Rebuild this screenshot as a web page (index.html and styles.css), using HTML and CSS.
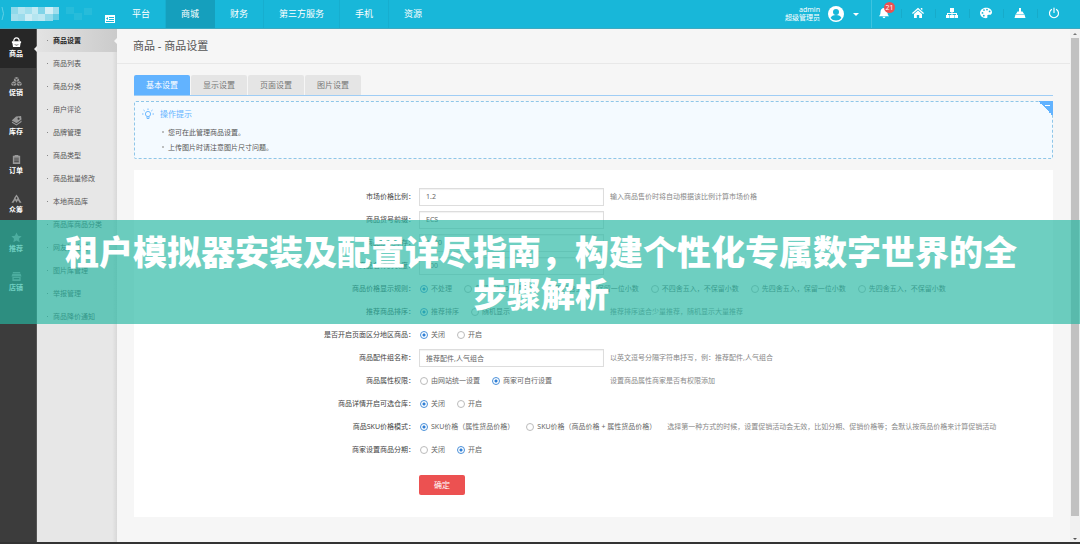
FILE: index.html
```html
<!DOCTYPE html>
<html lang="zh-CN">
<head>
<meta charset="utf-8">
<meta name="viewport" content="width=device-width, initial-scale=1">
<title>商品设置</title>
<link rel="stylesheet" href="styles.css">
</head>
<body>
<div class="app">
  <header class="topbar">
    <div class="brand">
      <svg class="logo" viewBox="0 0 92 28" aria-hidden="true">
        <path d="M2 7q3 7 0 13" fill="none" stroke="#5fcfe5"/>
        <path fill="#8fd9ea" d="M11 7h7v7h-7z"/><path fill="#b5e5f0" d="M18 7h7v7h-7z"/><path fill="#a2dfed" d="M25 7h7v7h-7z"/><path fill="#c2eaf3" d="M32 7h6v7h-6z"/><path fill="#80d4e8" d="M38 7h7v7h-7z"/><path fill="#d2eff6" d="M45 7h8v7h-8z"/><path fill="#a0deed" d="M53 7h6v7h-6z"/>
        <path fill="#a5dfed" d="M11 14h7v7h-7z"/><path fill="#9cdcec" d="M18 14h7v7h-7z"/><path fill="#cdedf5" d="M25 14h7v7h-7z"/><path fill="#b4e5f0" d="M32 14h6v7h-6z"/><path fill="#bce8f2" d="M38 14h7v7h-7z"/><path fill="#92daea" d="M45 14h8v7h-8z"/><path fill="#64cce3" d="M53 14h6v6h-6z"/>
        <path fill="#27bcda" d="M66 7h8v7h-8zM74 13h8v7h-8zM84 8h8v7h-8z"/>
      </svg>
      <button class="fold" aria-label="收起菜单"><svg viewBox="0 0 10 8"><path fill="#fff" fill-rule="evenodd" d="M0 0h10v8H0zM4 2v1h5V2zM4 4v1h5V4zM1 6v1h8V6zM3 2 1 3.500 3 5z"/></svg></button>
    </div>
    <nav class="mainnav">
      <a href="#">平台</a><a href="#" class="on">商城</a><a href="#">财务</a><a href="#">第三方服务</a><a href="#">手机</a><a href="#">资源</a>
    </nav>
    <div class="user">
      <div class="who"><span>admin</span><span>超级管理员</span></div>
      <svg class="avatar" viewBox="0 0 16 16"><circle cx="8" cy="8" r="8" fill="#fff"/><circle cx="8" cy="6" r="3" fill="#18b7d9"/><path d="M2.6 12q1-3 5.400-3t5.400 3Q11.500 14.500 8 14.500T2.600 12z" fill="#18b7d9"/></svg>
      <svg class="caret" viewBox="0 0 6 3"><path fill="#fff" d="M0 0h6L3 3z"/></svg>
    </div>
    <div class="tools">
      <button aria-label="消息"><svg viewBox="0 0 12 12"><path fill="#fff" d="M6 1c2.300 0 3.500 1.700 3.500 4 0 2.500.7 3.500 1.500 4.200H1C1.800 8.500 2.500 7.500 2.500 5 2.500 2.700 3.700 1 6 1zM4.600 9.800h2.800a1.400 1.400 0 0 1-2.800 0z"/></svg><span class="badge">21</span></button>
      <button aria-label="首页"><svg viewBox="0 0 12 12"><path fill="#fff" d="M6 .8 12 6l-.8.9L6 2.500.8 6.900 0 6zM8.800.9h1.500v2.500L8.800 2zM6 3.500l4 3.400V11H7.200V8H4.800v3H2V6.900z"/></svg></button>
      <button aria-label="网站地图"><svg viewBox="0 0 12 12"><path fill="#fff" d="M4 1h4v4H6.500v1H11v2h1v3H8.500V8H10V7H6.500v1H8v3H4V8h1.500V7H2v1h1.500v3H0V8h1V6h4.500V5H4z"/></svg></button>
      <button aria-label="主题"><svg viewBox="0 0 12 12"><path fill="#fff" fill-rule="evenodd" d="M6 .7c3.500 0 6 2 6 4.500C12 7 10.800 8 9 7.700 7.500 7.500 7 8.300 7.400 9.500 7.700 10.700 7 11.200 6 11.200 2.700 11.200 0 9 0 6S2.700.7 6 .7zM2.500 5a.9.900 0 1 0 0 1.800.9.900 0 0 0 0-1.800zM4 2.200A.9.900 0 1 0 4 4a.9.900 0 0 0 0-1.800zM7 1.700a.9.900 0 1 0 0 1.800.9.900 0 0 0 0-1.800zM9.600 3.500a.9.900 0 1 0 0 1.800.9.900 0 0 0 0-1.800zM3.800 7.800a.9.900 0 1 0 0 1.800.9.900 0 0 0 0-1.800z"/></svg></button>
      <button aria-label="清除缓存"><svg viewBox="0 0 12 12"><path fill="#fff" d="M5 1h2v3.500h1.500L10 7H2l1.500-2.500H5zM1.500 7.500h9L11.500 11H.5z"/></svg></button>
      <button aria-label="退出"><svg viewBox="0 0 12 12"><path fill="none" stroke="#fff" stroke-width="1.200" stroke-linecap="round" d="M3.500 2.500a4.500 4.500 0 1 0 5 0M6 1v4.500"/></svg></button>
    </div>
  </header>

  <div class="main">
    <nav class="rail">
      <a href="#" class="on"><svg viewBox="0 0 12 12"><path fill="none" stroke="currentColor" stroke-width="1.300" d="M3 5q0-4 3-4t3 4"/><path fill="currentColor" fill-rule="evenodd" d="M1 4.500h10v2h-.5L9.800 11H2.200L1.500 6.500H1zM4 7.500q2 2 4 0v1q-2 1.500-4 0z"/></svg>商品</a>
      <a href="#"><svg viewBox="0 0 12 12"><path fill="currentColor" d="M6 1l2.500 1.200L6 3.400 3.500 2.200zM3.200 2.800l2.500 1.200v2.500L3.200 5.300zM8.800 2.800v2.500L6.300 6.500V4zM3 5.800l2.500 1.200L3 8.200.5 7zM.4 7.500l2.300 1.200V11L.4 9.800zM5.600 7.500v2.300L3.300 11V8.700zM9 5.800 11.500 7 9 8.200 6.500 7zM6.400 7.500l2.300 1.200V11L6.400 9.800zM11.600 7.500v2.300L9.300 11V8.700z"/></svg>促销</a>
      <a href="#"><svg viewBox="0 0 12 12"><path fill="currentColor" fill-rule="evenodd" d="M5.500 1.500 11 1l.5 4L6 9 .8 6zM8.200 2.800a1.200 1.200 0 1 0 .1 0zM1 7.200l5 3L11.500 6v1.500L6 11.500 1 8.500z"/></svg>库存</a>
      <a href="#"><svg viewBox="0 0 12 12"><path fill="currentColor" fill-rule="evenodd" d="M2 2h2V1h4v1h2v9H2zM3.500 4v1h5V4zm0 2v1h5V6zm0 2v1h5V8z"/></svg>订单</a>
      <a href="#"><svg viewBox="0 0 12 12"><path fill="currentColor" d="M6 1.500 9 6H7.200L6 4.200 4.800 6H3zM3.500 6h1.800L6 7.300 6.700 6h1.800l3 4.500H9.300L7.600 8 6 10.500 4.400 8l-1.700 2.500H.5z"/></svg>众筹</a>
      <a href="#"><svg viewBox="0 0 12 12"><path fill="currentColor" d="M6 .5l1.700 3.600 3.900.5-2.900 2.700.8 3.900L6 9.300l-3.500 1.900.8-3.900L.4 4.600l3.900-.5z"/></svg>推荐</a>
      <a href="#"><svg viewBox="0 0 12 12"><path fill="currentColor" fill-rule="evenodd" d="M2 1h8v1.500H2zM1.500 3h9L11.500 6H.5zM1.500 6.500h9V11h-9zM3 7.500v1.500h6V7.500z"/></svg>店铺</a>
    </nav>
    <nav class="submenu">
      <a href="#" class="on">商品设置</a>
      <a href="#">商品列表</a>
      <a href="#">商品分类</a>
      <a href="#">用户评论</a>
      <a href="#">品牌管理</a>
      <a href="#">商品类型</a>
      <a href="#">商品批量修改</a>
      <a href="#">本地商品库</a>
      <a href="#">商品库商品分类</a>
      <a href="#">网友讨论圈</a>
      <a href="#">图片库管理</a>
      <a href="#">举报管理</a>
      <a href="#">商品降价通知</a>
    </nav>

    <main class="content">
      <h1>商品 - 商品设置</h1>
      <div class="inner">
        <div class="tabs">
          <button class="on">基本设置</button><button>显示设置</button><button>页面设置</button><button>图片设置</button>
        </div>
        <section class="tips">
          <h2><svg viewBox="0 0 12 12"><g fill="none" stroke="#62b3ff" stroke-width=".9"><circle cx="6" cy="6" r="2.600"/><path d="M5 8.500v2h2v-2M6 .5v1.500M0 6h1.500M10.500 6H12M1.500 2l1.200 1M10.500 2 9.300 3"/></g></svg>操作提示</h2>
          <ul><li>您可在此管理商品设置。</li><li>上传图片时请注意图片尺寸问题。</li></ul>
          <button class="close" aria-label="收起提示"></button>
        </section>

        <form class="panel">
          <div class="row"><label class="name" for="f1">市场价格比例：</label><div class="field"><input type="text" id="f1" value="1.2"></div><span class="hint">输入商品售价时将自动根据该比例计算市场价格</span></div>
          <div class="row"><label class="name" for="f2">商品货号前缀：</label><div class="field"><input type="text" id="f2" value="ECS"></div></div>
          <div class="row"><label class="name" for="f3">商品默认库存：</label><div class="field"><input type="text" id="f3" value="1000"></div></div>
          <div class="row"><label class="name" for="f4">商品名称的长度：</label><div class="field"><input type="text" id="f4" value="100"></div></div>
          <div class="row"><span class="name">商品价格显示规则：</span><div class="field">
            <label><input type="radio" name="price" checked>不处理</label><label><input type="radio" name="price">保留不为 0 的尾数</label><label><input type="radio" name="price">不四舍五入，保留一位小数</label><label><input type="radio" name="price">不四舍五入，不保留小数</label><label><input type="radio" name="price">先四舍五入，保留一位小数</label><label><input type="radio" name="price">先四舍五入，不保留小数</label></div></div>
          <div class="row"><span class="name">推荐商品排序：</span><div class="field"><label><input type="radio" name="sort" checked>推荐排序</label><label><input type="radio" name="sort">随机显示</label></div><span class="hint">推荐排序适合少量推荐，随机显示大量推荐</span></div>
          <div class="row"><span class="name">是否开启页面区分地区商品：</span><div class="field"><label><input type="radio" name="area" checked>关闭</label><label><input type="radio" name="area">开启</label></div></div>
          <div class="row"><label class="name" for="f5">商品配件组名称：</label><div class="field"><input type="text" id="f5" value="推荐配件,人气组合"></div><span class="hint">以英文逗号分隔字符串抒写，例：推荐配件,人气组合</span></div>
          <div class="row"><span class="name">商品属性权限：</span><div class="field"><label><input type="radio" name="attr">由网站统一设置</label><label><input type="radio" name="attr" checked>商家可自行设置</label></div><span class="hint">设置商品属性商家是否有权限添加</span></div>
          <div class="row"><span class="name">商品详情开启可选仓库：</span><div class="field"><label><input type="radio" name="store" checked>关闭</label><label><input type="radio" name="store">开启</label></div></div>
          <div class="row"><span class="name">商品SKU价格模式：</span><div class="field"><label><input type="radio" name="sku" checked>SKU价格（属性货品价格）</label><label><input type="radio" name="sku">SKU价格（商品价格 + 属性货品价格）</label></div><span class="hint">选择第一种方式的时候，设置促销活动会无效，比如分期、促销价格等；会默认按商品价格来计算促销活动</span></div>
          <div class="row"><span class="name">商家设置商品分期：</span><div class="field"><label><input type="radio" name="stage">关闭</label><label><input type="radio" name="stage" checked>开启</label></div></div>
          <div class="row submit"><span class="name"></span><button type="button">确定</button></div>
        </form>
      </div>
    </main>
    <div class="scroll" aria-hidden="true"><i class="up"></i><i class="thumb"></i><i class="down"></i></div>
  </div>
  <div class="banner">租户模拟器安装及配置详尽指南，构建个性化专属数字世界的全步骤解析</div>
</div>
</body>
</html>
```

FILE: styles.css
```css
* { box-sizing: border-box; }
body { margin: 0; font: 7px/14px "Noto Sans", "Noto Sans CJK SC", sans-serif; color: #555; background: #f6f6f6; }
a { color: inherit; text-decoration: none; }
button, input { font: inherit; color: inherit; margin: 0; padding: 0; border: 0; background: none; }
svg { display: block; }
ul, h1, h2 { margin: 0; padding: 0; font-weight: 400; list-style: none; }

.app { position: relative; display: flex; flex-direction: column; min-height: 100vh; border-bottom: 2px solid #333; }

.topbar { display: flex; height: 29px; background: #18b7d9; border-bottom: 1px solid #3ea9c0; color: #fff; padding-right: 9px; }
.brand { display: flex; width: 117px; }
.logo { width: 92px; height: 28px; }
.fold { align-self: flex-end; margin: 0 0 5px 13px; }
.fold svg { width: 10px; height: 8px; }
.mainnav { display: flex; flex: 1; font-size: 9px; line-height: 28px; }
.mainnav a { padding: 0 15px; border-right: 1px solid #17aecf; }
.mainnav a:last-child { border-right: 0; }
.mainnav .on { background: #159fbd; border-right-color: #159fbd; }
.user { display: flex; align-items: center; padding-right: 12px; margin-right: -5px; border-right: 1px solid #3dc4e0; }
.who { display: flex; flex-direction: column; text-align: right; line-height: 8px; }
.avatar { width: 16px; height: 16px; margin: 0 9px 0 8px; }
.caret { width: 6px; height: 3px; }
.tools { display: flex; }
.tools button { position: relative; width: 34px; display: flex; align-items: center; justify-content: center; padding-bottom: 2px; }
.tools svg { width: 12px; height: 12px; }
.tools button + button::before { content: ""; position: absolute; left: 0; top: 9px; height: 9px; border-left: 1px solid #17abca; }
.badge { position: absolute; left: 17px; top: 2px; width: 11px; height: 11px; border-radius: 6px; background: #ec5151; line-height: 11px; }

.main { display: flex; flex: 1; }
.rail { width: 37px; background: #3c3c3c; border-right: 1px solid #555; color: #fff; font-weight: 700; text-align: center; }
.rail a { position: relative; display: flex; flex-direction: column; align-items: center; height: 39px; padding: 8px 4px 0 0; line-height: 12px; }
.rail svg { width: 11px; height: 11px; color: #999; }
.rail .on { background: #272727; }
.rail .on svg { color: #fff; }
.rail .on::after { content: ""; position: absolute; right: -1px; top: 17px; border: 3px solid transparent; border-right-color: #eee; border-left: 0; }

.submenu { width: 80px; background: linear-gradient(90deg, #e7e7e7 94%, #d8d8d8); color: #555; }
.submenu a { position: relative; display: flex; align-items: center; height: 23px; padding-left: 16px; }
.submenu a::before { content: ""; position: absolute; left: 10px; width: 1px; height: 1px; background: #888; }
.submenu .on { color: #222; font-weight: 700; background: linear-gradient(90deg, #e3e3e3, #cbcbcb); }
.submenu .on::after { content: ""; position: absolute; right: 0; border: 3px solid transparent; border-right-color: #f6f6f6; border-left: 0; }

.content { flex: 1; min-width: 0; }
h1 { height: 35px; padding-left: 16px; border-bottom: 1px solid #e8e8e8; font-size: 11px; line-height: 34px; }
.inner { padding: 11px 17px 25px 17px; }
.tabs { display: flex; gap: 1px; border-bottom: 1px solid #9fcdf5; }
.tabs button { width: 56px; height: 20px; border-radius: 2px 2px 0 0; background: #e5e5e5; font-size: 8px; color: #777; }
.tabs .on { background: #62b3ff; color: #fff; }
.tips { position: relative; height: 58px; margin-top: 5px; padding: 5px 7px; border: 1px dashed #8fc6e8; border-radius: 2px; background: #f4faff; }
.tips h2 { display: flex; align-items: center; gap: 6px; font-size: 8px; line-height: 14px; color: #62b3ff; }
.tips h2 svg { width: 12px; height: 12px; }
.tips ul { padding: 4px 0 0 26px; line-height: 15px; }
.tips li { position: relative; }
.tips li::before { content: ""; position: absolute; left: -6px; top: 6px; width: 2px; height: 2px; border-radius: 1px; background: #aaa; }
.close { position: absolute; right: -1px; top: -1px; width: 15px; height: 15px; background: linear-gradient(45deg, transparent 50%, #62b3ff 50%); }
.close::after { content: ""; position: absolute; right: 3px; top: 4px; width: 5px; height: 1px; background: #fff; }

.panel { margin-top: 11px; padding: 15px 0 22px; background: #fff; }
.row { display: flex; align-items: center; min-height: 23px; }
.name { width: 281px; margin-right: 4px; flex: none; text-align: right; color: #444; }
.field { display: flex; min-width: 191px; color: #666; }
.field label { display: flex; align-items: center; margin-right: 11px; white-space: nowrap; }
input[type="text"] { width: 185px; height: 18px; padding: 0 6px; border: 1px solid #ddd; box-shadow: inset 0 1px 1px #f2f2f2; color: #666; }
input[type="radio"] { appearance: none; width: 8px; height: 8px; margin: 0 3px 0 1px; border: 1px solid #bbb; border-radius: 50%; background: #fff; }
input[type="radio"]:checked { border-color: #4a90d9; background: radial-gradient(circle, #2f7fd6 0 1px, #fff 2px); }
.hint { color: #888; }
.submit { margin-top: 14px; min-height: 20px; }
.submit button { width: 46px; height: 20px; border-radius: 2px; background: #ec5151; color: #fff; font-size: 8px; }

.scroll { display: flex; flex-direction: column; align-items: center; width: 10px; background: #f1f1f1; }
.up, .down { border: 2px solid transparent; }
.up { border-bottom-color: #777; border-top: 0; margin: 4px 0 3px; }
.thumb { flex: 1; width: 8px; background: #c1c1c1; max-height: 478px; }
.down { border-top-color: #555; border-bottom: 0; margin: auto 0 2px; }

.banner { position: absolute; left: 0; right: 0; top: 220px; padding: 10px 63px 10px 65px; background: rgba(38, 183, 162, .667); color: #fff; font: 900 34px/42px "Noto Sans CJK SC", sans-serif; text-align: center; }
```
